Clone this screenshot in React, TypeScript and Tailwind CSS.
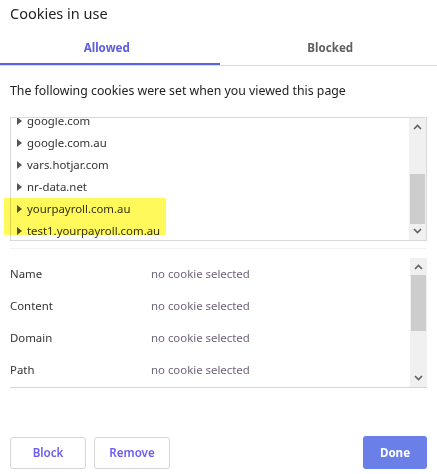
import React from 'react';

const domains = [
  'google.com',
  'google.com.au',
  'vars.hotjar.com',
  'nr-data.net',
  'yourpayroll.com.au',
  'test1.yourpayroll.com.au',
];

const fields = ['Name', 'Content', 'Domain', 'Path'];

function Chevron({ up }: { up?: boolean }) {
  return (
    <svg width="9" height="6" viewBox="0 0 9 6" className="block">
      <path
        d={up ? 'M1 5 L4.5 1.5 L8 5' : 'M1 1 L4.5 4.5 L8 1'}
        fill="none"
        stroke="#606060"
        strokeWidth="1.6"
      />
    </svg>
  );
}

function Scrollbar({ thumbTop, thumbHeight }: { thumbTop: number; thumbHeight: number }) {
  return (
    <div className="relative h-full w-[17px] shrink-0 bg-[#f0f0f0]">
      <div className="absolute left-0 right-0 top-[6px] flex justify-center">
        <Chevron up />
      </div>
      <div
        className="absolute left-[1px] right-[1px] bg-[#cdcdcd]"
        style={{ top: thumbTop, height: thumbHeight }}
      />
      <div className="absolute bottom-[6px] left-0 right-0 flex justify-center">
        <Chevron />
      </div>
    </div>
  );
}

export default function App() {
  return (
    <div
      className="relative h-[474px] w-[437px] overflow-hidden bg-white text-[#222]"
      style={{ fontFamily: '"Noto Sans", "Open Sans", sans-serif' }}
    >
      <h1 className="px-[10px] pt-[2px] text-[14.5px] leading-[22px] text-[#222]">Cookies in use</h1>

      <div className="mt-[9px] flex h-[33px] border-b border-[#dadada]">
        <div className="flex flex-1 items-center justify-center border-b-2 border-[#5866e0] pb-[1px] pr-[6px] text-[11.6px] font-bold text-[#5b5be6]">
          Allowed
        </div>
        <div className="flex flex-1 items-center justify-center pb-[2px] pl-[4px] text-[11.6px] font-bold text-[#5f5f5f]">
          Blocked
        </div>
      </div>

      <p className="mt-[16px] px-[10px] text-[12.3px] leading-[18px] text-[#222]">
        The following cookies were set when you viewed this page
      </p>

      <div className="relative mx-[10px] mt-[17px] flex h-[124px] border border-[#d9d9d9]">
        <div className="flex-1 overflow-hidden">
          <div className="-mt-[8px]">
            {domains.map((d) => (
              <div key={d} className="flex h-[22px] items-center pl-[6px] text-[11.4px] text-[#333]">
                <span className="mr-[5px] inline-block h-0 w-0 border-y-[4px] border-l-[5px] border-y-transparent border-l-[#555]" />
                {d}
              </div>
            ))}
          </div>
        </div>
        <Scrollbar thumbTop={56} thumbHeight={50} />
      </div>

      <div className="pointer-events-none absolute left-[4px] top-[198px] h-[37px] w-[162px] bg-[#fff95c] mix-blend-multiply" />

      <div className="mx-[10px] mt-[7px] border-t border-[#f2f2f2]" />

      <div className="mx-[10px] mt-[9px] flex h-[130px] border-b border-[#d4d4d4]">
        <div className="flex-1">
          {fields.map((f) => (
            <div key={f} className="flex h-[32px] items-center text-[11.4px]">
              <span className="w-[141px] text-[#333]">{f}</span>
              <span className="text-[#6e6479]">no cookie selected</span>
            </div>
          ))}
        </div>
        <Scrollbar thumbTop={17} thumbHeight={56} />
      </div>

      <div className="mt-[48px] flex items-center px-[10px]">
        <button className="h-[32px] w-[76px] rounded-[3px] border border-[#d6d6d6] text-[11.6px] font-semibold text-[#6c5cf0]">
          Block
        </button>
        <button className="ml-[8px] h-[32px] w-[76px] rounded-[3px] border border-[#d6d6d6] text-[11.6px] font-semibold text-[#6c5cf0]">
          Remove
        </button>
        <button className="ml-auto h-[33px] w-[64px] rounded-[3px] bg-[#6a7fe8] text-[11.6px] font-bold text-white">
          Done
        </button>
      </div>
    </div>
  );
}
